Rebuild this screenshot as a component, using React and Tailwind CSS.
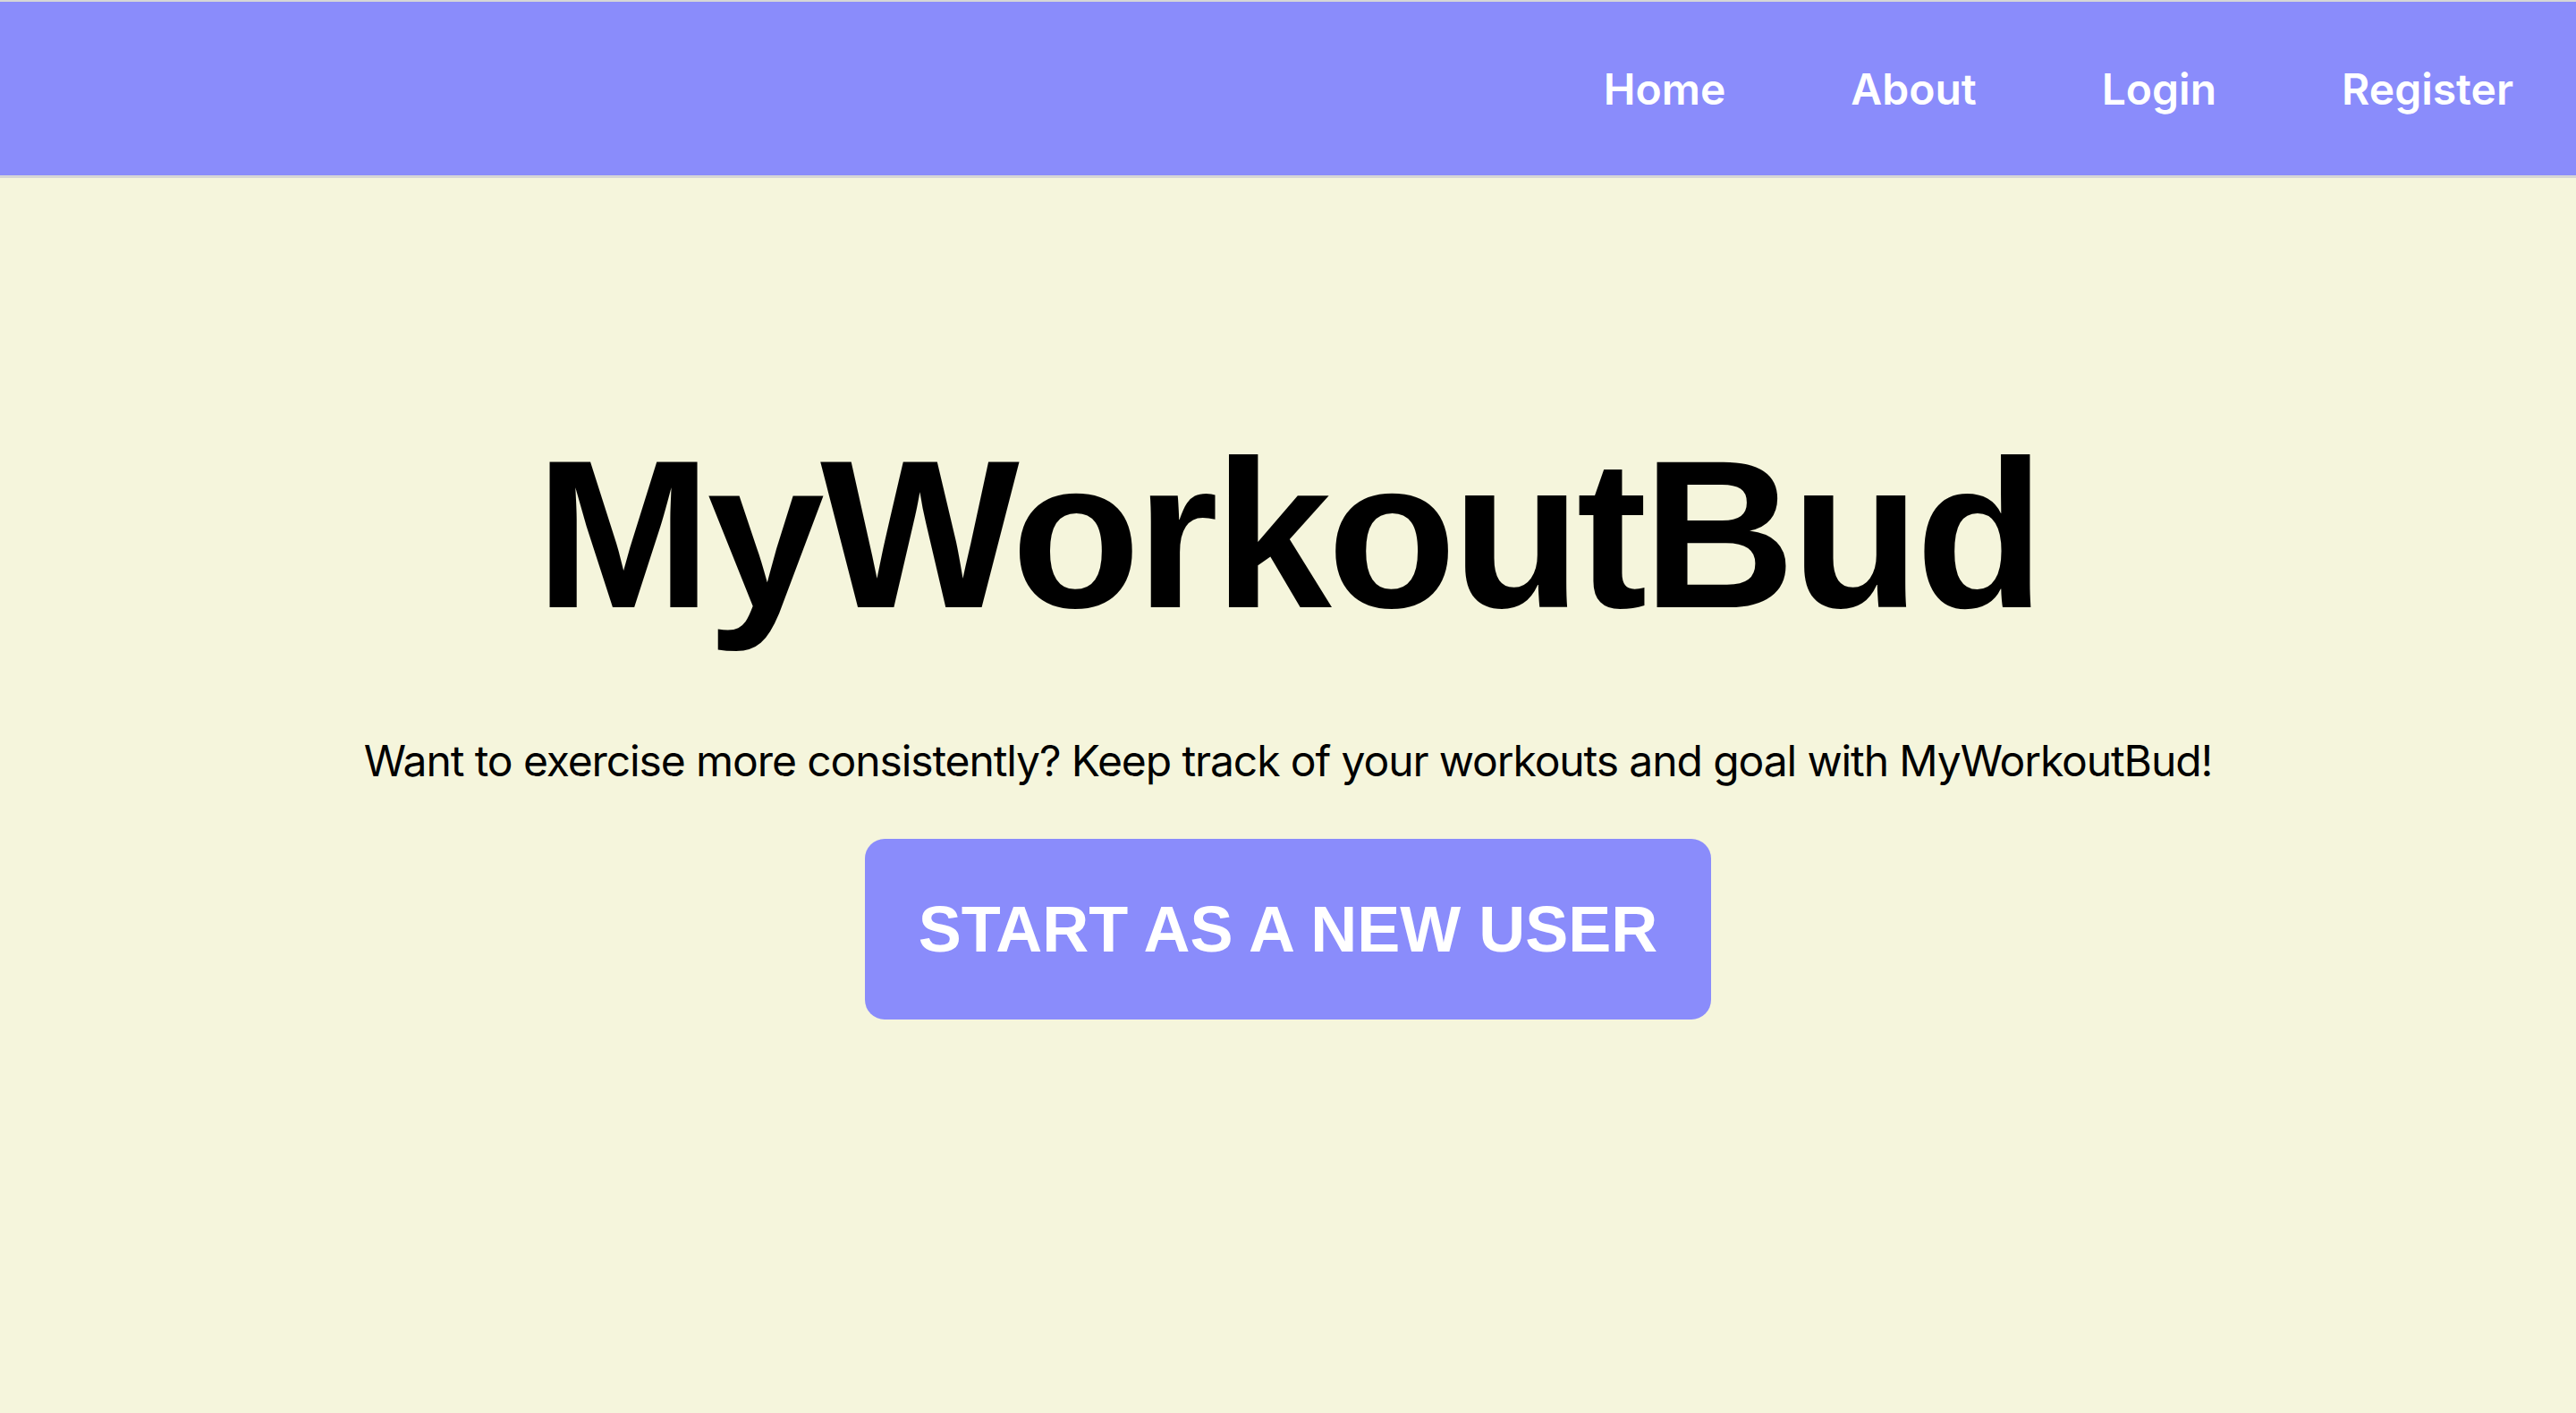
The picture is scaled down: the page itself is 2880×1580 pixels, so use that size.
const links = ['Home', 'About', 'Login', 'Register']

const Navbar = () => {
  return (
    <nav className="flex h-[199px] items-center justify-end border-t-2 border-b-[3px] border-[#d6d6d6] bg-[#8a8cfb] pr-[70px]">
      <ul className="flex items-center gap-[140px] pt-[2px]">
        {links.map((link) => (
          <li key={link}>
            <a
              href="#"
              className="font-['Inter',sans-serif] text-[48px] font-semibold leading-none text-white"
            >
              {link}
            </a>
          </li>
        ))}
      </ul>
    </nav>
  )
}

export default function App() {
  return (
    <div className="min-h-[1580px] bg-[#f5f5dc]">
      <Navbar />
      <main className="flex flex-col items-center">
        <h1 className="mt-[280px] font-['Liberation_Sans',Arial,sans-serif] text-[236px] font-bold leading-none tracking-[-0.02em] text-black">
          MyWorkoutBud
        </h1>
        <p className="mt-[112px] font-['Inter',sans-serif] text-[48px] leading-none tracking-[-0.023em] text-black">
          Want to exercise more consistently? Keep track of your workouts and goal with MyWorkoutBud!
        </p>
        <button className="mt-[63px] rounded-[22px] bg-[#8a8cfb] px-[60px] py-[60px] font-['Liberation_Sans',Arial,sans-serif] text-[72px] font-bold leading-[82px] text-white">
          START AS A NEW USER
        </button>
      </main>
    </div>
  )
}
